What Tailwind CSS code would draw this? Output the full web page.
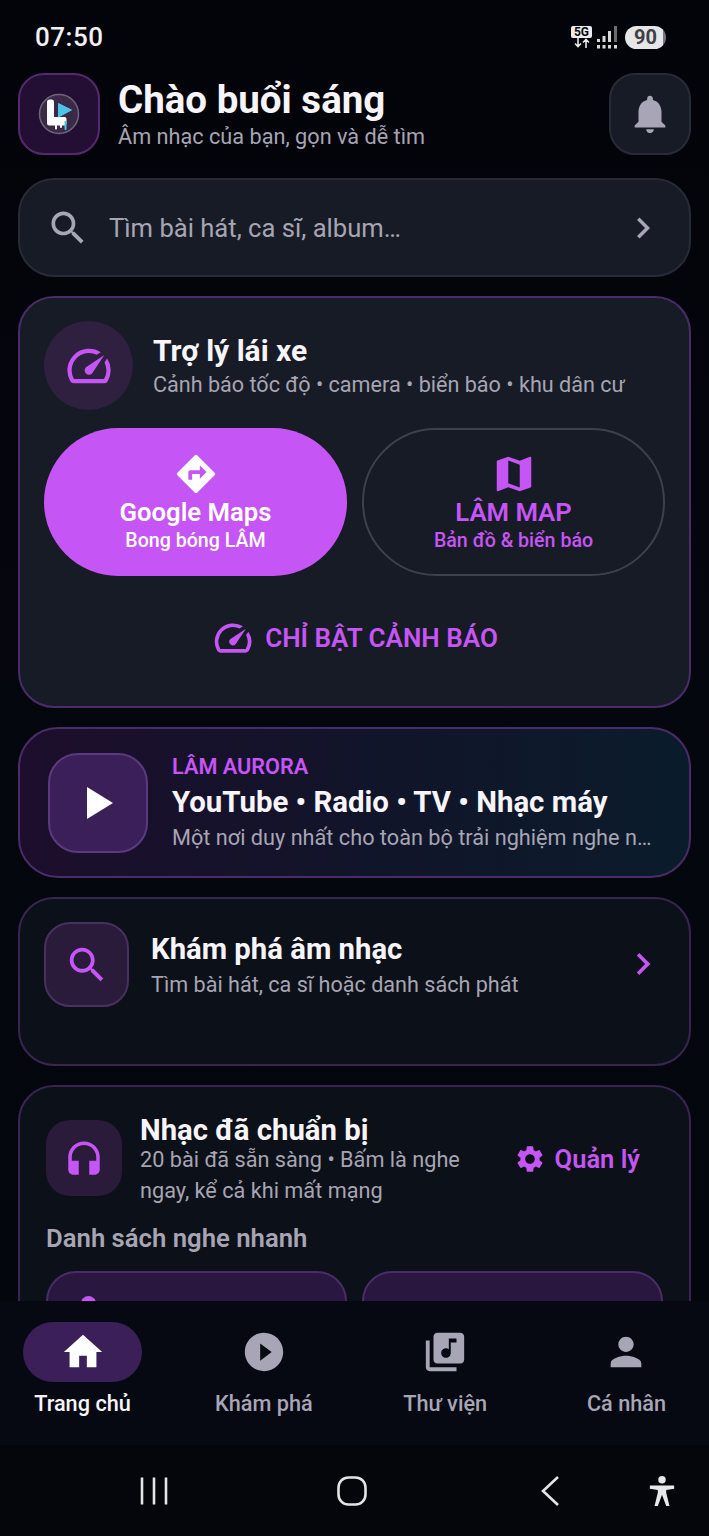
<!DOCTYPE html>
<html lang="vi">
<head>
  <meta charset="UTF-8" />
  <title>Trang chủ</title>
  <meta name="viewport" content="width=device-width, initial-scale=1.0" />
  <script src="https://cdn.jsdelivr.net/npm/@tailwindcss/browser@4"></script>
</head>
<body class="bg-[#04060d] font-['Roboto',sans-serif]">
<div class="w-[709px] h-[1536px] flex flex-col overflow-hidden bg-gradient-to-b from-[#030409] via-[#05070f] to-[#04060d]">

  <!-- Scrolling content -->
  <main class="h-[1301px] shrink-0 overflow-hidden px-[18px]">

    <!-- Status bar -->
    <div class="h-[73px] flex items-start justify-between pl-[17px] pr-[25px] pt-[21px]">
      <span class="text-[26px] leading-[33px] font-medium text-[#f1f1f4] tracking-[0.5px]">07:50</span>
      <div class="flex items-center gap-[4px] pt-[4px]">
        <div class="flex flex-col items-center w-[21px]">
          <span class="w-[21px] bg-[#ececec] text-[#08090e] rounded-[2px] text-[12px] leading-[12px] font-bold text-center">5G</span>
          <svg class="w-[20px] h-[10px]" viewBox="0 0 20 10" fill="none" stroke="#e8e8e8" stroke-width="1.6"><path d="M6 0v8M3 5.5l3 3 3-3M14 10V2M11 4.5l3-3 3 3"/></svg>
        </div>
        <svg class="w-[22px] h-[24px]" viewBox="0 0 22 24" fill="#d8d8da"><rect x="1" y="14" width="3" height="3"/><rect x="6.500" y="11" width="3" height="6"/><rect x="12" y="6" width="3" height="11"/><rect x="18" y="1" width="3" height="16" fill="#6c6c70"/><rect x="1" y="20" width="3" height="3.500"/><rect x="6.500" y="20" width="3" height="3.500"/><rect x="12" y="20" width="3" height="3.500"/><rect x="18" y="20" width="3" height="3.500"/></svg>
        <span class="ml-[3px] w-[41px] h-[23px] rounded-full bg-[linear-gradient(90deg,#e6e6e8_92%,#77777b_92%)] text-[#3f3f45] text-[20px] leading-[23px] font-bold text-center">90</span>
      </div>
    </div>

    <!-- Header -->
    <header class="h-[82px] flex items-center">
      <div class="w-[82px] h-[82px] rounded-[26px] border-2 border-[#55296f] bg-[#220f33] flex items-center justify-center shrink-0">
        <svg class="w-[42px] h-[42px]" viewBox="0 0 42 42">
          <circle cx="21" cy="21" r="19.500" fill="#3a2a48" stroke="#6f6478" stroke-width="1.500"/>
          <path d="M9 9a2.500 2.500 0 0 1 2.500-2.500h2a2.500 2.500 0 0 1 2.500 2.500v15h10.500a2 2 0 0 1 2 2v4.500a2 2 0 0 1-2 2h-2.500v1.500a1 1 0 0 1-2 0v-1.500h-3v3a1 1 0 0 1-2 0v-3h-5.500a2.500 2.500 0 0 1-2.500-2.500z" fill="#fff"/>
          <path d="M20.500 10.500l13 6.500-13 7z" fill="#4cc4ea" stroke="#4cc4ea" stroke-width="1" stroke-linejoin="round"/>
          <path d="M26.500 28h2v8a1 1 0 0 1-2 0z" fill="#4cc4ea"/>
        </svg>
      </div>
      <div class="ml-[18px] flex-1 min-w-0 pt-[2px]">
        <h1 class="text-[38.5px] leading-[44px] font-bold text-[#f7f5fb]">Chào buổi sáng</h1>
        <p class="text-[21.7px] leading-[30px] text-[#a7a5b3]">Âm nhạc của bạn, gọn và dễ tìm</p>
      </div>
      <button class="w-[82px] h-[82px] rounded-[26px] border-2 border-[#262b37] bg-[#171b26] flex items-center justify-center shrink-0">
        <svg class="w-[46px] h-[46px]" viewBox="0 0 24 24" fill="#a8a6b6"><path d="M12 22c1.100 0 2-.9 2-2h-4c0 1.100.89 2 2 2zm6-6v-5c0-3.070-1.640-5.640-4.500-6.320V4c0-.83-.67-1.500-1.500-1.500s-1.500.67-1.500 1.500v.68C7.630 5.360 6 7.920 6 11v5l-2 2v1h16v-1l-2-2z"/></svg>
      </button>
    </header>

    <!-- Search -->
    <div class="mt-[23px] h-[99px] rounded-[36px] border-2 border-[#272b38] bg-[#171b26] flex items-center pl-[26px] pr-[25px]">
      <svg class="w-[44px] h-[44px] shrink-0" viewBox="0 0 24 24" fill="#a8a6b6"><path d="M15.500 14h-.79l-.28-.27C15.410 12.590 16 11.110 16 9.500 16 5.910 13.090 3 9.500 3S3 5.910 3 9.500 5.910 16 9.500 16c1.610 0 3.090-.59 4.230-1.570l.27.28v.79l5 4.990L20.490 19l-4.990-5zm-6 0C7.010 14 5 11.990 5 9.500S7.010 5 9.500 5 14 7.010 14 9.500 11.990 14 9.500 14z"/></svg>
      <span class="ml-[19px] flex-1 text-[25.6px] leading-[32px] text-[#a7a5b3]">Tìm bài hát, ca sĩ, album…</span>
      <svg class="w-[42px] h-[42px] shrink-0" viewBox="0 0 24 24" fill="#a8a6b6"><path d="M10 6L8.590 7.410 13.170 12l-4.580 4.590L10 18l6-6z"/></svg>
    </div>

    <!-- Driving assistant -->
    <section class="mt-[19px] h-[412px] rounded-[36px] border-2 border-[#4a2c68] bg-[#171b26] px-[24px] pt-[23px]">
      <div class="flex items-center">
        <div class="w-[89px] h-[89px] rounded-full bg-[#2f2040] flex items-center justify-center shrink-0">
          <svg class="w-[52px] h-[52px]" viewBox="0 0 24 24" fill="#c655f5"><path d="M20.380 8.570l-1.230 1.850a8 8 0 0 1-.22 7.580H5.070A8 8 0 0 1 15.580 6.850l1.850-1.230A10 10 0 0 0 3.350 19a2 2 0 0 0 1.720 1h13.850a2 2 0 0 0 1.740-1 10 10 0 0 0-.27-10.440zm-9.790 6.840a2 2 0 0 0 2.830 0l5.660-8.490-8.490 5.660a2 2 0 0 0 0 2.830z"/></svg>
        </div>
        <div class="ml-[20px] min-w-0 pt-[1px]">
          <h2 class="text-[30px] leading-[38px] font-bold text-[#f7f5fb]">Trợ lý lái xe</h2>
          <p class="text-[21.6px] leading-[30px] text-[#a7a5b3] whitespace-nowrap">Cảnh báo tốc độ • camera • biển báo • khu dân cư</p>
        </div>
      </div>
      <div class="mt-[18px] flex gap-[15px]">
        <button class="w-[303px] h-[148px] rounded-[74px] bg-[#c655f5] flex flex-col items-center justify-center text-white">
          <svg class="w-[46px] h-[46px]" viewBox="0 0 24 24" fill="#fff"><path d="M21.710 11.290l-9-9c-.39-.39-1.020-.39-1.410 0l-9 9c-.39.39-.39 1.020 0 1.410l9 9c.39.39 1.020.39 1.410 0l9-9c.39-.38.39-1.010 0-1.410zM14 14.500V12h-4v3H8v-4c0-.55.45-1 1-1h5V7.500l3.500 3.500-3.500 3.500z"/></svg>
          <span class="mt-[-1px] text-[25.7px] leading-[32px] font-semibold">Google Maps</span>
          <span class="text-[19.6px] leading-[26px] font-medium">Bong bóng LÂM</span>
        </button>
        <button class="w-[303px] h-[148px] rounded-[74px] border-2 border-[#3d414d] flex flex-col items-center justify-center text-[#c655f5]">
          <svg class="w-[46px] h-[46px]" viewBox="0 0 24 24" fill="#c655f5"><path d="M20.500 3l-.16.03L15 5.100 9 3 3.360 4.900c-.21.07-.36.25-.36.48V20.500c0 .28.22.5.5.5l.16-.03L9 18.900l6 2.100 5.640-1.900c.21-.07.36-.25.36-.48V3.500c0-.28-.22-.5-.5-.5zM15 19l-6-2.110V5l6 2.110V19z"/></svg>
          <span class="mt-[-1px] text-[25.7px] leading-[32px] font-semibold">LÂM MAP</span>
          <span class="text-[19.6px] leading-[26px] font-medium">Bản đồ &amp; biển báo</span>
        </button>
      </div>
      <div class="mt-[40px] flex items-center justify-center gap-[10px] text-[#c655f5]">
        <svg class="w-[44px] h-[44px]" viewBox="0 0 24 24" fill="#c655f5"><path d="M20.380 8.570l-1.230 1.850a8 8 0 0 1-.22 7.580H5.070A8 8 0 0 1 15.580 6.850l1.850-1.230A10 10 0 0 0 3.350 19a2 2 0 0 0 1.720 1h13.850a2 2 0 0 0 1.740-1 10 10 0 0 0-.27-10.440zm-9.790 6.840a2 2 0 0 0 2.830 0l5.660-8.490-8.490 5.660a2 2 0 0 0 0 2.830z"/></svg>
        <span class="text-[26px] leading-[32px] font-semibold">CHỈ BẬT CẢNH BÁO</span>
      </div>
    </section>

    <!-- Aurora -->
    <section class="mt-[19px] h-[151px] rounded-[40px] border-2 border-[#4a2c68] bg-gradient-to-r from-[#1c0e2c] via-[#11142a] to-[#0a1c2b] flex items-center pl-[28px] pr-[36px]">
      <div class="w-[100px] h-[100px] rounded-[30px] border-2 border-[#5b3a80] bg-[#3a1f58] flex items-center justify-center shrink-0">
        <svg class="w-[32px] h-[36px] ml-[4px]" viewBox="0 0 32 36" fill="#fff"><path d="M3 2l26 16-26 16z"/></svg>
      </div>
      <div class="ml-[24px] min-w-0 flex-1 pt-[2px]">
        <p class="text-[21.7px] leading-[26px] font-semibold text-[#c655f5]">LÂM AURORA</p>
        <h2 class="mt-[2px] text-[29.4px] leading-[40px] font-bold text-[#f7f5fb] whitespace-nowrap">YouTube • Radio • TV • Nhạc máy</h2>
        <p class="mt-[1px] text-[21.7px] leading-[30px] text-[#a7a5b3] whitespace-nowrap">Một nơi duy nhất cho toàn bộ trải nghiệm nghe n…</p>
      </div>
    </section>

    <!-- Discover -->
    <section class="mt-[19px] h-[169px] rounded-[36px] border-2 border-[#3a2552] bg-[#0c1018] flex items-start pl-[24px] pr-[24px] pt-[23px]">
      <div class="w-[85px] h-[85px] rounded-[26px] border-2 border-[#49305f] bg-[#2a1b3a] flex items-center justify-center shrink-0">
        <svg class="w-[46px] h-[46px]" viewBox="0 0 24 24" fill="#c655f5"><path d="M15.500 14h-.79l-.28-.27C15.410 12.590 16 11.110 16 9.500 16 5.910 13.090 3 9.500 3S3 5.910 3 9.500 5.910 16 9.500 16c1.610 0 3.090-.59 4.230-1.570l.27.28v.79l5 4.990L20.490 19l-4.990-5zm-6 0C7.010 14 5 11.990 5 9.500S7.010 5 9.500 5 14 7.010 14 9.500 11.990 14 9.500 14z"/></svg>
      </div>
      <div class="ml-[22px] flex-1 min-w-0 pt-[9px]">
        <h2 class="text-[29.3px] leading-[36px] font-bold text-[#f7f5fb]">Khám phá âm nhạc</h2>
        <p class="mt-[3px] text-[21.6px] leading-[30px] text-[#a7a5b3]">Tìm bài hát, ca sĩ hoặc danh sách phát</p>
      </div>
      <svg class="w-[44px] h-[44px] shrink-0 mt-[20px]" viewBox="0 0 24 24" fill="#c655f5"><path d="M10 6L8.590 7.410 13.170 12l-4.580 4.590L10 18l6-6z"/></svg>
    </section>

    <!-- Prepared music -->
    <section class="mt-[19px] rounded-[36px] border-2 border-[#3a2552] bg-[#0c1018] pl-[26px] pr-[25px] pt-[25px] h-[400px]">
      <div class="flex items-start">
        <div class="mt-[8px] w-[76px] h-[76px] rounded-[24px] bg-[#2a1b3a] flex items-center justify-center shrink-0">
          <svg class="w-[42px] h-[42px]" viewBox="0 -1.500 24 24" fill="#c655f5"><path d="M12 1c-4.970 0-9 4.030-9 9v7c0 1.660 1.340 3 3 3h3v-8H5v-2c0-3.870 3.130-7 7-7s7 3.130 7 7v2h-4v8h3c1.660 0 3-1.340 3-3v-7c0-4.970-4.030-9-9-9z"/></svg>
        </div>
        <div class="ml-[18px] w-[340px] shrink-0">
          <h2 class="text-[29.3px] leading-[32px] font-bold text-[#f7f5fb] mt-[2px]">Nhạc đã chuẩn bị</h2>
          <p class="text-[21.7px] leading-[31px] text-[#a7a5b3] mt-[-2px]">20 bài đã sẵn sàng • Bấm là nghe ngay, kể cả khi mất mạng</p>
        </div>
        <div class="ml-auto mt-[31px] pr-[24px] flex items-center gap-[9px] text-[#c655f5]">
          <svg class="w-[32px] h-[32px]" viewBox="0 0 24 24" fill="#c655f5"><path d="M19.140 12.940c.04-.3.06-.61.06-.94 0-.32-.02-.64-.07-.94l2.030-1.580c.18-.14.23-.41.12-.61l-1.920-3.320c-.12-.22-.37-.29-.59-.22l-2.390.96c-.5-.38-1.030-.7-1.620-.94l-.36-2.540c-.04-.24-.24-.41-.48-.41h-3.840c-.24 0-.43.17-.47.41l-.36 2.540c-.59.24-1.130.57-1.620.94l-2.390-.96c-.22-.08-.47 0-.59.22L2.740 8.870c-.12.21-.08.47.12.61l2.030 1.580c-.05.3-.09.63-.09.94s.02.64.07.94l-2.030 1.580c-.18.14-.23.41-.12.61l1.920 3.320c.12.22.37.29.59.22l2.390-.96c.5.38 1.030.7 1.620.94l.36 2.540c.05.24.24.41.48.41h3.840c.24 0 .44-.17.47-.41l.36-2.540c.59-.24 1.130-.56 1.620-.94l2.390.96c.22.08.47 0 .59-.22l1.920-3.320c.12-.22.07-.47-.12-.61l-2.010-1.580zM12 15.600c-1.980 0-3.600-1.620-3.600-3.600s1.620-3.600 3.600-3.600 3.600 1.620 3.600 3.600-1.620 3.600-3.600 3.600z"/></svg>
          <span class="text-[25.5px] leading-[32px] font-semibold">Quản lý</span>
        </div>
      </div>
      <h3 class="mt-[16px] text-[25.7px] leading-[32px] font-semibold text-[#a7a5b3]">Danh sách nghe nhanh</h3>
      <div class="mt-[17px] flex gap-[15px]">
        <div class="w-[301px] h-[120px] rounded-[30px] border-2 border-[#4a2c68] bg-[#2a1740] pl-[33px] pt-[23px]">
          <div class="w-[15px] h-[15px] rounded-full bg-[#c655f5]"></div>
        </div>
        <div class="w-[301px] h-[120px] rounded-[30px] border-2 border-[#4a2c68] bg-[#2a1740]"></div>
      </div>
    </section>
  </main>

  <!-- Bottom navigation -->
  <nav class="h-[144px] shrink-0 bg-[#060912] flex justify-between px-[23px] pt-[21px]">
    <div class="w-[119px] flex flex-col items-center">
      <div class="w-[119px] h-[60px] rounded-[30px] bg-[#3a1f58] flex items-center justify-center">
        <svg class="w-[46px] h-[46px]" viewBox="0 0 24 24" fill="#fff"><path d="M10 20v-6h4v6h5v-8h3L12 3 2 12h3v8z"/></svg>
      </div>
      <span class="mt-[6px] text-[21.7px] leading-[32px] font-medium text-[#f7f5fb] whitespace-nowrap">Trang chủ</span>
    </div>
    <div class="w-[119px] flex flex-col items-center">
      <div class="w-[119px] h-[60px] flex items-center justify-center">
        <svg class="w-[46px] h-[46px]" viewBox="0 0 24 24" fill="#a8a6b6"><path d="M12 2C6.480 2 2 6.480 2 12s4.480 10 10 10 10-4.480 10-10S17.520 2 12 2zm-2 14.500v-9l6 4.500-6 4.500z"/></svg>
      </div>
      <span class="mt-[6px] text-[21.7px] leading-[32px] font-medium text-[#a8a6b6] whitespace-nowrap">Khám phá</span>
    </div>
    <div class="w-[119px] flex flex-col items-center">
      <div class="w-[119px] h-[60px] flex items-center justify-center">
        <svg class="w-[46px] h-[46px]" viewBox="0 0 24 24" fill="#a8a6b6"><path d="M20 2H8c-1.100 0-2 .9-2 2v12c0 1.100.9 2 2 2h12c1.100 0 2-.9 2-2V4c0-1.100-.9-2-2-2zm-2 5h-3v5.500c0 1.380-1.120 2.500-2.500 2.500S10 13.880 10 12.500s1.120-2.500 2.500-2.500c.57 0 1.080.19 1.500.51V5h4v2zM4 6H2v14c0 1.100.9 2 2 2h14v-2H4V6z"/></svg>
      </div>
      <span class="mt-[6px] text-[21.7px] leading-[32px] font-medium text-[#a8a6b6] whitespace-nowrap">Thư viện</span>
    </div>
    <div class="w-[119px] flex flex-col items-center">
      <div class="w-[119px] h-[60px] flex items-center justify-center">
        <svg class="w-[46px] h-[46px]" viewBox="0 0 24 24" fill="#a8a6b6"><path d="M12 12c2.210 0 4-1.790 4-4s-1.790-4-4-4-4 1.790-4 4 1.790 4 4 4zm0 2c-2.670 0-8 1.340-8 4v2h16v-2c0-2.660-5.330-4-8-4z"/></svg>
      </div>
      <span class="mt-[6px] text-[21.7px] leading-[32px] font-medium text-[#a8a6b6] whitespace-nowrap">Cá nhân</span>
    </div>
  </nav>

  <!-- System navigation -->
  <div class="flex-1 bg-[#05060b]">
    <div class="h-full flex items-center">
      <svg class="ml-[139px] w-[30px] h-[30px]" viewBox="0 0 30 30" stroke="#e4e4e6" stroke-width="2.600" fill="none"><path d="M3 1.500v27M15 1.500v27M27 1.500v27"/></svg>
      <svg class="ml-[167px] w-[32px] h-[32px]" viewBox="0 0 32 32" stroke="#e4e4e6" stroke-width="2.600" fill="none"><rect x="2.500" y="2.500" width="27" height="27" rx="10"/></svg>
      <svg class="ml-[171px] w-[22px] h-[32px]" viewBox="0 0 22 32" stroke="#e4e4e6" stroke-width="2.600" fill="none"><path d="M19 2L4 16l15 14"/></svg>
      <svg class="ml-[87px] w-[28px] h-[32px]" viewBox="0 0 30 34" fill="#e8e8ea"><circle cx="15" cy="5" r="4"/><path d="M2 11h26v3.500l-8.500 1.500v3l3.500 14h-3.500L15 21l-4.500 12H7l3.500-14v-3L2 14.500z"/></svg>
    </div>
  </div>
</div>
</body>
</html>
